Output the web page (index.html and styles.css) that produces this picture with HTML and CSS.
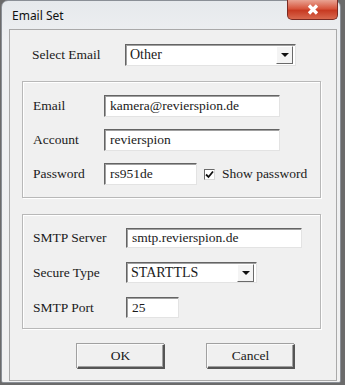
FILE: index.html
```html
<!DOCTYPE html>
<html>
<head>
    <title>Email Set</title>
    <link rel="stylesheet" href="styles.css">
</head>
<body>
    <div class="window">
        <div class="titlebar">
            <span class="title">Email Set</span>
            <div class="close">
                <svg width="14" height="11" viewBox="0 0 14 11">
                    <path d="M3 1.5 L11 9.5 M11 1.5 L3 9.5" stroke="#fff" stroke-width="3.2" stroke-linecap="butt"/>
                </svg>
            </div>
        </div>

        <div class="client">
            <div class="row top-row">
                <span class="lbl wide">Select Email</span>
                <div class="combo combo-email">
                    <span class="combo-text">Other</span>
                    <span class="combo-btn"><span class="arrow"></span></span>
                </div>
            </div>

            <div class="group group-account">
                <div class="row">
                    <span class="lbl">Email</span>
                    <div class="field f-email">kamera@revierspion.de</div>
                </div>
                <div class="row">
                    <span class="lbl">Account</span>
                    <div class="field f-email">revierspion</div>
                </div>
                <div class="row">
                    <span class="lbl">Password</span>
                    <div class="field f-pass">rs951de</div>
                    <span class="check">
                        <svg width="9" height="9" viewBox="0 0 9 9">
                            <path d="M1 4.5 L3.5 7 L8 1.5" stroke="#111" stroke-width="1.8" fill="none"/>
                        </svg>
                    </span>
                    <span class="check-label">Show password</span>
                </div>
            </div>

            <div class="group group-smtp">
                <div class="row">
                    <span class="lbl wide">SMTP Server</span>
                    <div class="field f-server">smtp.revierspion.de</div>
                </div>
                <div class="row">
                    <span class="lbl wide">Secure Type</span>
                    <div class="combo combo-secure">
                        <span class="combo-text">STARTTLS</span>
                        <span class="combo-btn"><span class="arrow"></span></span>
                    </div>
                </div>
                <div class="row">
                    <span class="lbl wide">SMTP Port</span>
                    <div class="field f-port">25</div>
                </div>
            </div>

            <div class="buttons">
                <button class="btn">OK</button>
                <button class="btn">Cancel</button>
            </div>
        </div>
    </div>
</body>
</html>
```
FILE: styles.css
```css
body {
    margin: 0;
    background: #6b6b6b;
    font-family: "Liberation Serif", Tinos, "Times New Roman", Times, serif;
    font-size: 13px;
    color: #1a1a1a;
}
.window {
    width: 340px;
    height: 383px;
    margin-left: 1px;
    background: linear-gradient(to bottom, #e6e9ec, #eef0f2 40px, #f1f1f1);
    border: 1px solid #8a8f96;
    border-radius: 7px 7px 2px 2px;
    box-sizing: border-box;
    padding: 0 4px 0 7px;
    display: flex;
    flex-direction: column;
}
.titlebar {
    height: 28px;
    position: relative;
    display: flex;
    align-items: center;
}
.title {
    font-family: "Noto Sans", "Open Sans", sans-serif;
    font-size: 12px;
    color: #111;
    margin-left: 3px;
    margin-top: 1px;
}
.close {
    position: absolute;
    top: -1px;
    right: -2px;
    width: 49px;
    height: 19px;
    border: 1px solid #7a2a22;
    border-top: none;
    border-radius: 0 0 5px 5px;
    background: linear-gradient(to bottom, #e9a393, #d7563e 45%, #c73a22 55%, #d8684e);
    display: flex;
    align-items: center;
    justify-content: center;
}
.client {
    width: 328px;
    height: 352px;
    box-sizing: border-box;
    background: #f0f0f0;
    border: 1px solid #a9a9a9;
    padding: 14px 15px 0 12px;
    display: flex;
    flex-direction: column;
}
.row {
    display: flex;
    align-items: center;
}
.lbl {
    width: 71px;
    flex-shrink: 0;
    font-family: "Liberation Serif", Tinos, serif;
    font-size: 13.5px;
}
.lbl.wide {
    width: 93px;
}
.top-row {
    padding-left: 10px;
    margin-bottom: 15px;
}
.combo {
    background: #fff;
    border-top: 1px solid #646464;
    border-left: 1px solid #646464;
    border-right: 1px solid #e3e3e3;
    border-bottom: 1px solid #e3e3e3;
    box-shadow: inset 1px 1px 0 #a0a0a0;
    box-sizing: border-box;
    height: 22px;
    display: flex;
    align-items: center;
    justify-content: space-between;
    padding-left: 4px;
}
.combo-email {
    width: 171px;
}
.combo-secure {
    width: 131px;
    height: 21px;
}
.combo-text {
    font-family: "Liberation Serif", Tinos, serif;
    font-size: 14px;
}
.combo-btn {
    width: 15px;
    height: 16px;
    margin-right: 2px;
    background: #f4f4f4;
    border-top: 1px solid #fff;
    border-left: 1px solid #fff;
    border-right: 1px solid #6a6a6a;
    border-bottom: 1px solid #6a6a6a;
    display: flex;
    align-items: center;
    justify-content: center;
}
.arrow {
    width: 0;
    height: 0;
    border-left: 4px solid transparent;
    border-right: 4px solid transparent;
    border-top: 4px solid #111;
}
.group {
    border: 1px solid #b8b8b8;
    box-shadow: inset 1px 1px 0 #fff, 1px 1px 0 #fff;
    padding: 13px 10px 12px 10px;
    display: flex;
    flex-direction: column;
    gap: 12px;
}
.group-account {
    height: 117px;
    box-sizing: border-box;
    margin-bottom: 16px;
}
.group-smtp {
    height: 115px;
    box-sizing: border-box;
    gap: 14px;
}
.field {
    background: #fff;
    border-top: 1px solid #646464;
    border-left: 1px solid #646464;
    border-right: 1px solid #e3e3e3;
    border-bottom: 1px solid #e3e3e3;
    box-shadow: inset 1px 1px 0 #a0a0a0;
    box-sizing: border-box;
    height: 22px;
    padding: 0 5px;
    display: flex;
    align-items: center;
    font-family: "Liberation Serif", Tinos, serif;
    font-size: 13.5px;
}
.f-email {
    width: 176px;
}
.f-pass {
    width: 93px;
}
.f-server {
    width: 176px;
    height: 20px;
}
.f-port {
    width: 53px;
    height: 21px;
}
.check {
    width: 11px;
    height: 11px;
    box-sizing: border-box;
    margin-left: 7px;
    background: #fff;
    border-top: 1px solid #6a6a6a;
    border-left: 1px solid #6a6a6a;
    border-right: 1px solid #d8d8d8;
    border-bottom: 1px solid #d8d8d8;
    display: flex;
    align-items: center;
    justify-content: center;
}
.check-label {
    margin-left: 7px;
    font-family: "Liberation Serif", Tinos, serif;
    font-size: 13.5px;
}
.buttons {
    display: flex;
    justify-content: space-between;
    padding: 0 26px 0 55px;
    margin-top: 15px;
}
.btn {
    width: 88px;
    height: 25px;
    font-family: "Liberation Serif", Tinos, serif;
    font-size: 13.5px;
    color: #1a1a1a;
    background: #f0f0f0;
    border-top: 1px solid #fafafa;
    border-left: 1px solid #fafafa;
    border-right: 2px solid #555;
    border-bottom: 2px solid #555;
    box-shadow: inset -1px -1px 0 #a0a0a0, -1px -1px 0 #a0a0a0;
    padding: 0;
}
```
